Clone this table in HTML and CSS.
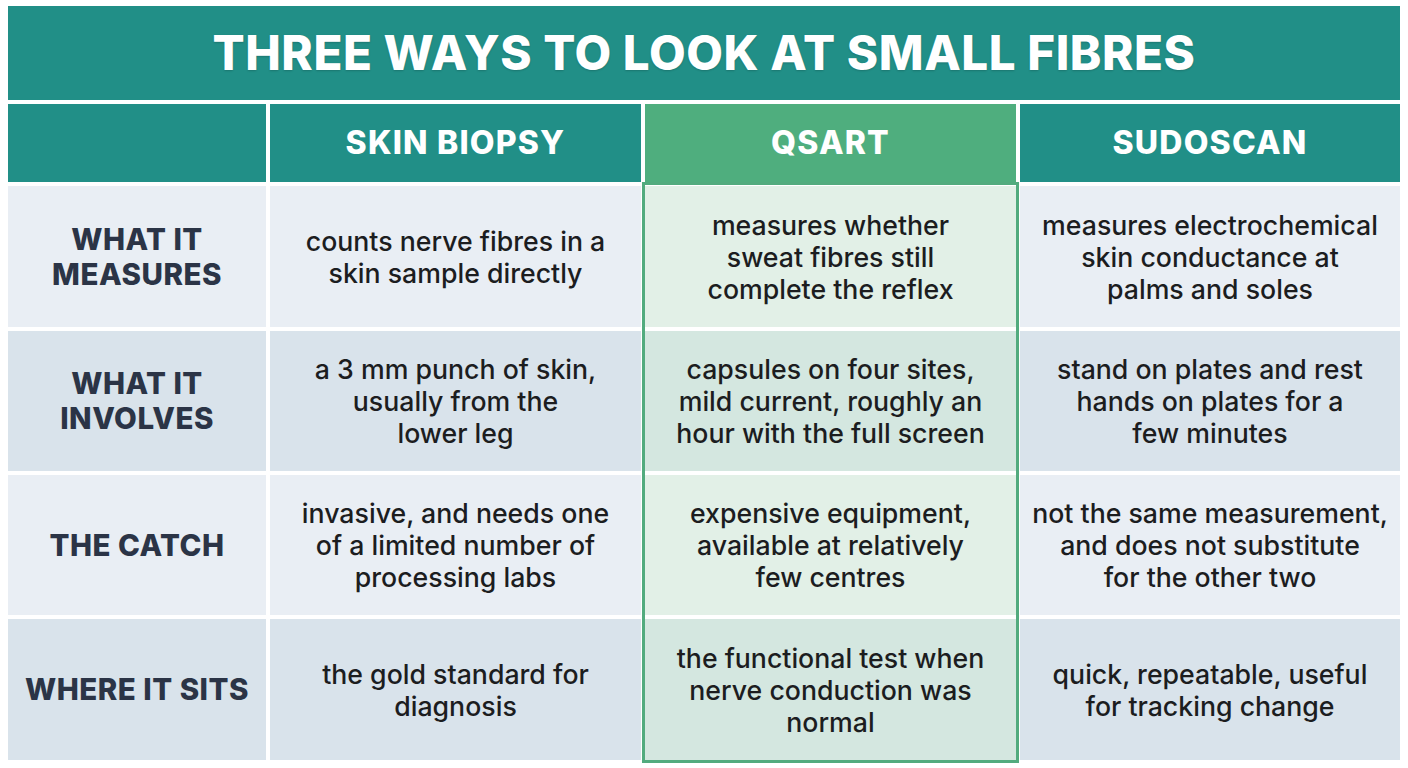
FILE: index.html
```html
<!DOCTYPE html>
<html lang="en">
<head>
<meta charset="utf-8">
<title>Three ways to look at small fibres</title>
<link rel="stylesheet" href="styles.css">
</head>
<body>
<div class="page">
  <div class="table">
    <div class="title">THREE WAYS TO LOOK AT SMALL FIBRES</div>

    <div class="head blank"></div>
    <div class="head">SKIN BIOPSY</div>
    <div class="head hl">QSART</div>
    <div class="head">SUDOSCAN</div>

    <div class="label odd">WHAT IT<br>MEASURES</div>
    <div class="cell odd">counts nerve fibres in a<br>skin sample directly</div>
    <div class="cell odd hl">measures whether<br>sweat fibres still<br>complete the reflex</div>
    <div class="cell odd">measures electrochemical<br>skin conductance at<br>palms and soles</div>

    <div class="label even">WHAT IT<br>INVOLVES</div>
    <div class="cell even">a 3 mm punch of skin,<br>usually from the<br>lower leg</div>
    <div class="cell even hl">capsules on four sites,<br>mild current, roughly an<br>hour with the full screen</div>
    <div class="cell even">stand on plates and rest<br>hands on plates for a<br>few minutes</div>

    <div class="label odd">THE CATCH</div>
    <div class="cell odd">invasive, and needs one<br>of a limited number of<br>processing labs</div>
    <div class="cell odd hl">expensive equipment,<br>available at relatively<br>few centres</div>
    <div class="cell odd">not the same measurement,<br>and does not substitute<br>for the other two</div>

    <div class="label even">WHERE IT SITS</div>
    <div class="cell even">the gold standard for<br>diagnosis</div>
    <div class="cell even hl">the functional test when<br>nerve conduction was<br>normal</div>
    <div class="cell even">quick, repeatable, useful<br>for tracking change</div>

    <div class="highlight-frame"></div>
  </div>
</div>
</body>
</html>
```

FILE: styles.css
```css
* { box-sizing: border-box; }

html, body {
  margin: 0;
  padding: 0;
  background: #ffffff;
}

body {
  font-family: Inter, "Open Sans", "Liberation Sans", sans-serif;
  width: 1408px;
  height: 768px;
  overflow: hidden;
}

.page {
  padding: 6px 8px 0 8px;
}

.table {
  position: relative;
  display: grid;
  grid-template-columns: 258px 371px 371px 380px;
  grid-template-rows: 94px 78px 141px 140px 140px 141px;
  gap: 4px;
}

.title {
  grid-column: 1 / -1;
  background: #218f87;
  color: #ffffff;
  display: flex;
  align-items: center;
  justify-content: center;
  font-size: 47.5px;
  font-weight: 800;
  letter-spacing: 0.6px;
  text-shadow: 0 1px 2px rgba(0, 0, 0, 0.18);
  padding-bottom: 2px;
}

.head {
  background: #218f87;
  color: #ffffff;
  display: flex;
  align-items: center;
  justify-content: center;
  font-size: 32px;
  font-weight: 800;
  letter-spacing: 1.2px;
  padding-bottom: 2px;
}

.head.hl {
  background: #4fae7e;
}

.label {
  display: flex;
  align-items: center;
  justify-content: center;
  text-align: center;
  color: #2b3446;
  font-size: 29.5px;
  font-weight: 800;
  line-height: 35px;
  letter-spacing: 0.5px;
}

.cell {
  display: flex;
  align-items: center;
  justify-content: center;
  text-align: center;
  color: #1c1d1f;
  font-size: 26.7px;
  font-weight: 500;
  line-height: 32px;
}

.odd { background: #e9eef4; }
.even { background: #d9e3eb; }

.cell.odd.hl { background: #e2f0e7; }
.cell.even.hl { background: #d4e7e0; }

.highlight-frame {
  position: absolute;
  left: 634px;
  top: 176px;
  width: 377px;
  height: 581px;
  border: 3px solid #52ab7e;
  pointer-events: none;
}
```
